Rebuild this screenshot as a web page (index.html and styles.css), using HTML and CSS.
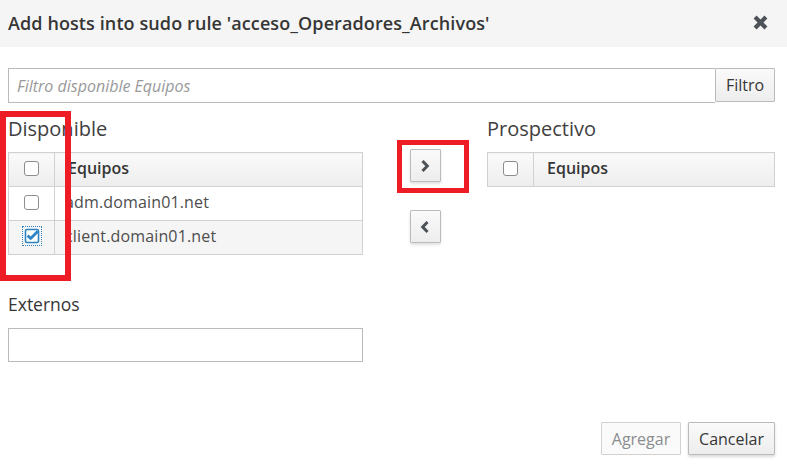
FILE: index.html
```html
<!DOCTYPE html>
<html lang="es">
<head>
<meta charset="utf-8">
<title>Add hosts</title>
<link rel="stylesheet" href="styles.css">
</head>
<body>
<div class="dialog">
  <header class="dlg-header">
    <h1 class="dlg-title">Add hosts into sudo rule 'acceso_Operadores_Archivos'</h1>
    <button class="close" aria-label="Cerrar">
      <svg width="17" height="17" viewBox="0 0 16 16"><path d="M1.5 4.3 4.3 1.5 8 5.2 11.7 1.5 14.5 4.3 10.8 8 14.5 11.7 11.7 14.5 8 10.8 4.3 14.5 1.5 11.7 5.2 8Z" fill="#4d5258"/></svg>
    </button>
  </header>
  <div class="dlg-body">
    <div class="filter-row">
      <input class="filter-input" type="text" placeholder="Filtro disponible Equipos">
      <button class="btn btn-filter">Filtro</button>
    </div>
    <div class="columns">
      <div class="col">
        <div class="col-label">Disponible</div>
        <table class="tbl">
          <tr class="thead"><td class="cb"><span class="chk"></span></td><td class="name head">Equipos</td></tr>
          <tr><td class="cb"><span class="chk"></span></td><td class="name">adm.domain01.net</td></tr>
          <tr class="odd"><td class="cb"><span class="chk-on"><svg width="18" height="18" viewBox="0 0 18 18"><rect x="2.5" y="2.5" width="13" height="13" rx="1.5" fill="#fff" stroke="#2f85c3" stroke-width="1.6"/><path d="M4.6 8.6 7.6 11.4 14.8 4.2" fill="none" stroke="#2f85c3" stroke-width="2.8" stroke-linejoin="round"/></svg></span></td><td class="name">client.domain01.net</td></tr>
        </table>
      </div>
      <div class="mid">
        <button class="btn btn-arrow" aria-label="Añadir"><svg width="10" height="14" viewBox="0 0 10 14"><path d="M2.5 2 7.3 7 2.5 12" fill="none" stroke="#4d5258" stroke-width="3"/></svg></button>
        <button class="btn btn-arrow" aria-label="Quitar"><svg width="10" height="14" viewBox="0 0 10 14"><path d="M7.5 2 2.7 7 7.5 12" fill="none" stroke="#4d5258" stroke-width="3"/></svg></button>
      </div>
      <div class="col">
        <div class="col-label">Prospectivo</div>
        <table class="tbl">
          <tr class="thead"><td class="cb"><span class="chk"></span></td><td class="name head">Equipos</td></tr>
        </table>
      </div>
    </div>
    <div class="ext">
      <label class="ext-label">Externos</label>
      <input class="ext-input" type="text">
    </div>
  </div>
  <footer class="dlg-footer">
    <button class="btn btn-disabled">Agregar</button>
    <button class="btn btn-cancel">Cancelar</button>
  </footer>
  <div class="mark mark-left"></div>
  <div class="mark mark-right"></div>
</div>
</body>
</html>
```

FILE: styles.css
```css
* { box-sizing: border-box; }
html, body { margin: 0; padding: 0; background: #fff; }
body { font-family: "Open Sans", "Noto Sans", sans-serif; color: #363636; width: 787px; height: 469px; overflow: hidden; }
.dialog { position: relative; height: 469px; }
.dlg-header { height: 47px; background: #f5f5f5; display: flex; align-items: center; justify-content: space-between; padding: 0 18px 0 8px; }
.dlg-title { margin: 0; font-size: 18px; font-weight: 600; color: #363636; line-height: 40px; padding-bottom: 1px; letter-spacing: 0.1px; }
.close { border: 0; background: none; padding: 0; width: 17px; height: 17px; display: flex; margin-bottom: 2px; }
.dlg-body { padding: 21px 12px 0 8px; }
.filter-row { display: flex; height: 35px; }
.filter-input { flex: 1; height: 35px; border: 1px solid #bbb; border-right: 0; font-family: inherit; font-size: 16px; padding: 0 8px; color: #363636; }
.filter-input::placeholder { color: #999; font-style: italic; }
.btn { font-family: inherit; font-size: 16px; color: #363636; border: 1px solid #bbb; background: linear-gradient(#fafafa, #ededed); border-radius: 1px; padding: 0 9px; cursor: pointer; }
.btn-filter { height: 34px; width: 60px; padding: 0; }
.columns { display: grid; grid-template-columns: 355px 124px 288px; margin-top: 12px; }
.col-label { font-size: 20px; line-height: 27px; height: 27px; color: #404040; }
.tbl { border-collapse: collapse; margin-top: 10px; width: 100%; font-size: 16px; }
.tbl td { border: 1px solid #d1d1d1; height: 34px; padding: 0 0 3px 0; }
.tbl tr.thead td { background: linear-gradient(#fafafa, #ededed); }
.tbl tr.odd td { background: #f5f5f5; }
.tbl td.cb { width: 46px; text-align: center; vertical-align: middle; }
.tbl td.name { padding-left: 10px; color: #4d4d4d; letter-spacing: 0.15px; }
.tbl td.head { font-weight: 600; color: #363636; padding-left: 13px; letter-spacing: 0; }
.chk { display: inline-block; width: 15px; height: 15px; border: 1.5px solid #8b8d8f; border-radius: 3px; background: #fff; vertical-align: middle; margin-top: -3px; }
.chk-on { display: inline-flex; outline: 1px dotted #2f85c3; outline-offset: 0; vertical-align: middle; margin-top: -3px; }
.mid { display: flex; flex-direction: column; align-items: center; padding-top: 34px; gap: 28px; }
.btn-arrow { width: 31px; height: 33px; padding: 0; display: flex; align-items: center; justify-content: center; box-shadow: 0 2px 3px rgba(0,0,0,0.12); }
.ext { width: 355px; margin-top: 38px; }
.ext-label { display: block; font-size: 17.5px; line-height: 23px; color: #363636; }
.ext-input { display: block; width: 355px; height: 34px; border: 1px solid #bbb; margin-top: 12px; }
.dlg-footer { display: flex; justify-content: flex-end; gap: 7px; padding: 60px 12px 0 0; margin-top: 0; }
.btn-disabled { height: 33px; width: 80px; padding: 0; color: #8b8d8f; background: #fafafa; border-color: #d1d1d1; }
.btn-cancel { height: 33px; width: 87px; padding: 0; box-shadow: 0 2px 3px rgba(0,0,0,0.15); }
.mark { position: absolute; border: 6px solid #ee1c25; }
.mark-left { left: 0; top: 111px; width: 71px; height: 170px; }
.mark-right { left: 397px; top: 140px; width: 72px; height: 53px; border-width: 5px; }
```
